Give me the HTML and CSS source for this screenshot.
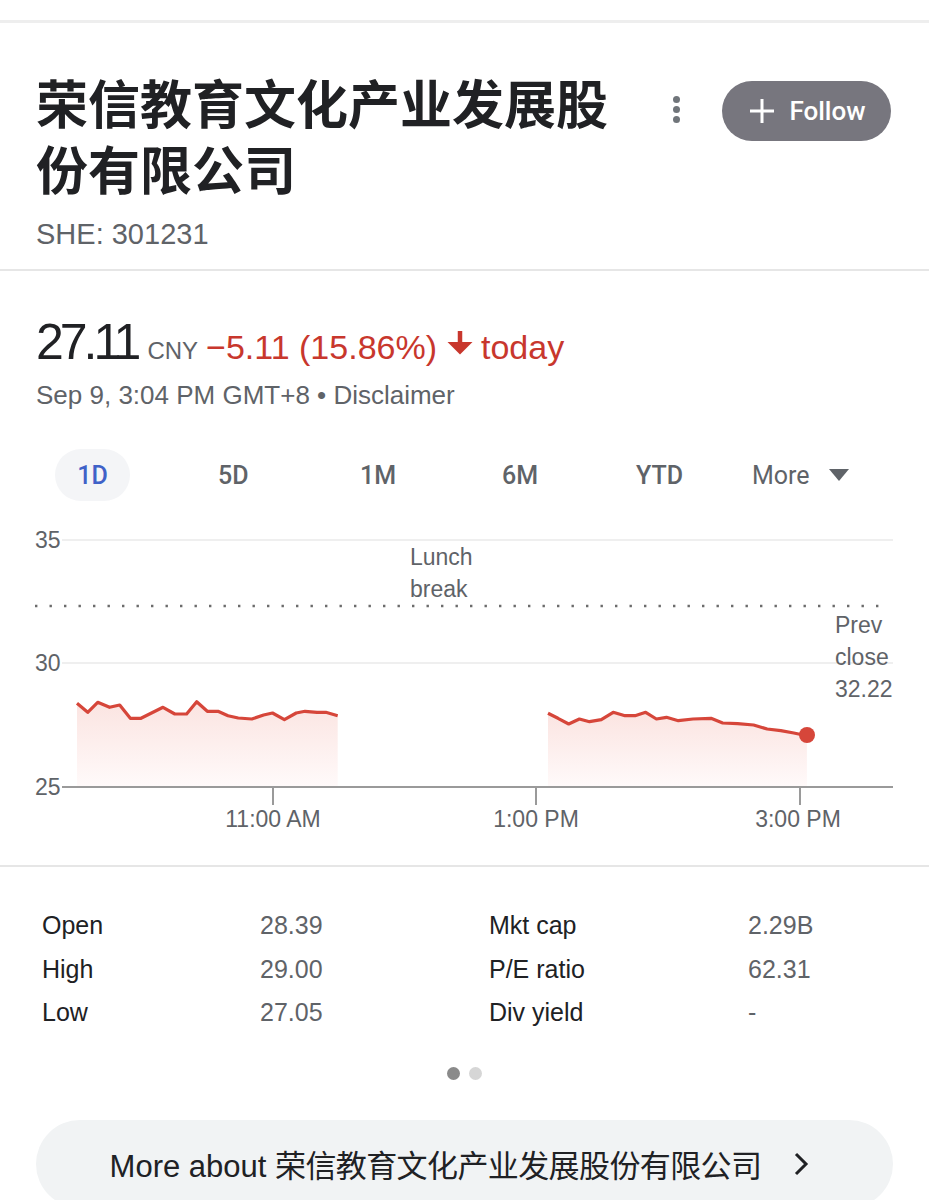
FILE: index.html
```html
<!DOCTYPE html>
<html lang="zh">
<head>
<meta charset="utf-8">
<title>荣信教育文化产业发展股份有限公司</title>
<link rel="stylesheet" href="styles.css">
</head>
<body>
<div class="topbar"></div>
<header class="header">
  <div class="head-row">
    <h1 class="title">荣信教育文化产业发展股份有限公司</h1>
    <div class="kebab"><span></span><span></span><span></span></div>
    <button class="follow">
      <svg class="plus" width="26" height="26" viewBox="0 0 26 26"><path d="M13 1v24M1 13h24" stroke="#fff" stroke-width="3" fill="none"/></svg>
      <span>Follow</span>
    </button>
  </div>
  <div class="ticker">SHE: 301231</div>
</header>

<section class="quote">
  <div class="price-row">
    <span class="price">27.11</span>
    <span class="cur">CNY</span>
    <span class="change">−5.11 (15.86%)</span>
    <svg class="down" width="26" height="24" viewBox="0 0 26 24"><path d="M13 0v13" stroke="#c8372d" stroke-width="4.5"/><path d="M0.5 11h25L13 23.5z" fill="#c8372d"/></svg>
    <span class="change">today</span>
  </div>
  <div class="date">Sep 9, 3:04 PM GMT+8 • Disclaimer</div>

  <nav class="tabs">
    <span class="tab active">1D</span>
    <span class="tab">5D</span>
    <span class="tab">1M</span>
    <span class="tab">6M</span>
    <span class="tab">YTD</span>
    <span class="tab more">More <svg width="22" height="14" viewBox="0 0 22 14"><path d="M1 1h20L11 13z" fill="#5f6368"/></svg></span>
  </nav>

  <svg class="chart" width="929" height="346" viewBox="0 0 929 346">
    <defs>
      <linearGradient id="fillg" x1="0" y1="0" x2="0" y2="1">
        <stop offset="0" stop-color="#fbe4e1"/>
        <stop offset="1" stop-color="#fffafa"/>
      </linearGradient>
    </defs>
    <line x1="62" y1="21" x2="893" y2="21" stroke="#efefef" stroke-width="2"/>
    <line x1="62" y1="144" x2="893" y2="144" stroke="#efefef" stroke-width="2"/>
    <text class="ylab" x="35" y="29">35</text>
    <text class="ylab" x="35" y="152">30</text>
    <text class="ylab" x="35" y="276">25</text>
    <line x1="35" y1="87" x2="880" y2="87" stroke="#6b6b6b" stroke-width="2.4" stroke-dasharray="2.4 12.1"/>
    <text class="clab" x="410" y="46">Lunch</text>
    <text class="clab" x="410" y="78">break</text>
    <text class="clab" x="835" y="114">Prev</text>
    <text class="clab" x="835" y="146">close</text>
    <text class="clab" x="835" y="178">32.22</text>

    <path d="M77 184.3L87.7 193.3L97.7 183.3L109.6 188.3L119.7 186L130.3 199.3L141 199.3L163 188.3L174.8 195L186.6 195L196.7 182.7L207.3 192.3L218 192.3L228 196.7L238.2 199L251.8 200L263.6 196L272.5 194L284.4 200.7L296.2 194L305 192.3L317 193.3L325.8 193.3L337.7 196.7L337.7 268L77 268Z" fill="url(#fillg)"/>
    <path d="M548 194.3L558 199.3L568.7 205L579.4 200L589.5 202.7L601.3 200.7L613.2 193.3L625 196.7L635 196.7L645.7 193.3L656.4 200L666.5 198.3L678.3 201.7L693 200L711 199.3L722.7 204L737.6 204.7L753.6 206L767.2 210L780.8 211.7L793.8 214L806.9 216.7L806.9 268L548 268Z" fill="url(#fillg)"/>
    <path d="M77 184.3L87.7 193.3L97.7 183.3L109.6 188.3L119.7 186L130.3 199.3L141 199.3L163 188.3L174.8 195L186.6 195L196.7 182.7L207.3 192.3L218 192.3L228 196.7L238.2 199L251.8 200L263.6 196L272.5 194L284.4 200.7L296.2 194L305 192.3L317 193.3L325.8 193.3L337.7 196.7" fill="none" stroke="#d6463a" stroke-width="3.2" stroke-linejoin="round"/>
    <path d="M548 194.3L558 199.3L568.7 205L579.4 200L589.5 202.7L601.3 200.7L613.2 193.3L625 196.7L635 196.7L645.7 193.3L656.4 200L666.5 198.3L678.3 201.7L693 200L711 199.3L722.7 204L737.6 204.7L753.6 206L767.2 210L780.8 211.7L793.8 214L806.9 216.7" fill="none" stroke="#d6463a" stroke-width="3.2" stroke-linejoin="round"/>
    <circle cx="807" cy="216" r="8" fill="#d6463a"/>

    <line x1="62" y1="268" x2="893" y2="268" stroke="#9a9a9a" stroke-width="2"/>
    <line x1="273" y1="268" x2="273" y2="286" stroke="#9a9a9a" stroke-width="2"/>
    <line x1="536" y1="268" x2="536" y2="286" stroke="#9a9a9a" stroke-width="2"/>
    <line x1="800" y1="268" x2="800" y2="286" stroke="#9a9a9a" stroke-width="2"/>
    <text class="xlab" x="273" y="308">11:00 AM</text>
    <text class="xlab" x="536" y="308">1:00 PM</text>
    <text class="xlab" x="798" y="308">3:00 PM</text>
  </svg>
</section>

<section class="stats">
  <div class="grid">
    <span class="k">Open</span><span class="v">28.39</span><span class="k">Mkt cap</span><span class="v">2.29B</span>
    <span class="k">High</span><span class="v">29.00</span><span class="k">P/E ratio</span><span class="v">62.31</span>
    <span class="k">Low</span><span class="v">27.05</span><span class="k">Div yield</span><span class="v">-</span>
  </div>
  <div class="pager"><span class="dot on"></span><span class="dot"></span></div>
  <a class="more-btn" href="#">
    <span class="more-text">More about <span class="cjk">荣信教育文化产业发展股份有限公司</span></span>
    <svg width="16" height="26" viewBox="0 0 16 26"><path d="M3 3l10 10-10 10" stroke="#202124" stroke-width="3" fill="none"/></svg>
  </a>
</section>
</body>
</html>
```

FILE: styles.css
```css
* { box-sizing: border-box; }
html, body { margin: 0; padding: 0; background: #fff; }
body {
  width: 929px;
  font-family: "Liberation Sans", "Noto Sans CJK SC", sans-serif;
  color: #202124;
  overflow: hidden;
}
.topbar {
  height: 23px;
  border-bottom: 3px solid #eeeeee;
}
.header {
  padding: 46px 36px 17px 36px;
  border-bottom: 2px solid #e6e6e6;
}
.head-row {
  display: flex;
  align-items: flex-start;
}
.title {
  margin: 0;
  width: 590px;
  font-family: "Noto Sans CJK SC", "Liberation Sans", sans-serif;
  font-size: 52px;
  line-height: 66px;
  font-weight: 700;
  color: #202124;
}
.kebab {
  margin: 27px 0 0 47px;
  width: 8px;
  display: flex;
  flex-direction: column;
  gap: 3px;
}
.kebab span {
  width: 7px;
  height: 7px;
  border-radius: 50%;
  background: #70757a;
}
.follow {
  margin: 12px 0 0 41px;
  width: 169px;
  height: 60px;
  border: none;
  border-radius: 30px;
  background: #77767e;
  color: #fff;
  display: flex;
  align-items: center;
  justify-content: center;
  gap: 14px;
  padding: 0 0 0 2px;
  font-family: Roboto, "Liberation Sans", sans-serif;
  font-weight: 500;
  font-size: 26px;
}
.ticker {
  margin-top: 15px;
  font-size: 29px;
  line-height: 36px;
  color: #5f6368;
}
.quote {
  padding-top: 43px;
}
.price-row {
  display: flex;
  align-items: baseline;
  padding-left: 36px;
  height: 56px;
}
.price {
  font-size: 50px;
  letter-spacing: -4px;
  line-height: 56px;
  color: #202124;
  margin-right: 10px;
}
.cur {
  font-size: 24px;
  color: #5f6368;
  margin-right: 8px;
}
.change {
  font-size: 34px;
  color: #c8372d;
}
.down {
  margin: 0 8px 0 10px;
  align-self: center;
  position: relative;
  top: 1px;
}
.date {
  margin-top: 9px;
  padding-left: 36px;
  font-size: 26px;
  line-height: 32px;
  color: #5f6368;
}
.tabs {
  margin-top: 38px;
  height: 52px;
  padding-left: 55px;
  display: grid;
  grid-template-columns: 75px 142px 142px 142px 142px 200px;
  align-items: center;
  font-family: Roboto, "Liberation Sans", sans-serif;
  font-weight: 500;
  font-size: 25px;
  color: #5f6368;
}
.tab {
  height: 52px;
  display: flex;
  align-items: center;
  justify-content: flex-start;
}
.tab.active { justify-content: center; }
.tabs .tab:nth-child(2) { padding-left: 88px; }
.tabs .tab:nth-child(3) { padding-left: 88px; }
.tabs .tab:nth-child(4) { padding-left: 88px; }
.tabs .tab:nth-child(5) { padding-left: 80px; }
.tabs .tab.more { padding-left: 54px; gap: 18px; font-weight: 400; }
.tab.active {
  background: #f4f5f7;
  border-radius: 26px;
  color: #3f62c8;
}
.chart {
  display: block;
  margin-top: 18px;
}
.ylab, .clab, .xlab {
  font-family: "Liberation Sans", sans-serif;
  font-size: 23px;
  fill: #5f6368;
}
.xlab { text-anchor: middle; }
.stats {
  border-top: 2px solid #e6e6e6;
  padding-top: 37px;
}
.grid {
  display: grid;
  grid-template-columns: 218px 229px 259px 1fr;
  padding-left: 42px;
  grid-auto-rows: 43.5px;
  align-items: center;
  font-size: 25px;
}
.k { color: #202124; }
.v { color: #5f6368; }
.pager {
  margin-top: 32px;
  display: flex;
  justify-content: center;
  gap: 9px;
  padding-right: 1px;
}
.dot {
  width: 13px;
  height: 13px;
  border-radius: 50%;
  background: #d6d6d6;
}
.dot.on { background: #8a8a8a; }
.more-btn {
  margin: 40px 36px 0 36px;
  height: 88px;
  border-radius: 44px;
  background: #f1f3f4;
  display: flex;
  align-items: center;
  justify-content: center;
  gap: 32px;
  text-decoration: none;
  color: #202124;
  padding-right: 10px;
}
.more-text {
  font-size: 31px;
  white-space: nowrap;
}
.cjk {
  font-family: "Noto Sans CJK SC", sans-serif;
  letter-spacing: -0.6px;
}
```
